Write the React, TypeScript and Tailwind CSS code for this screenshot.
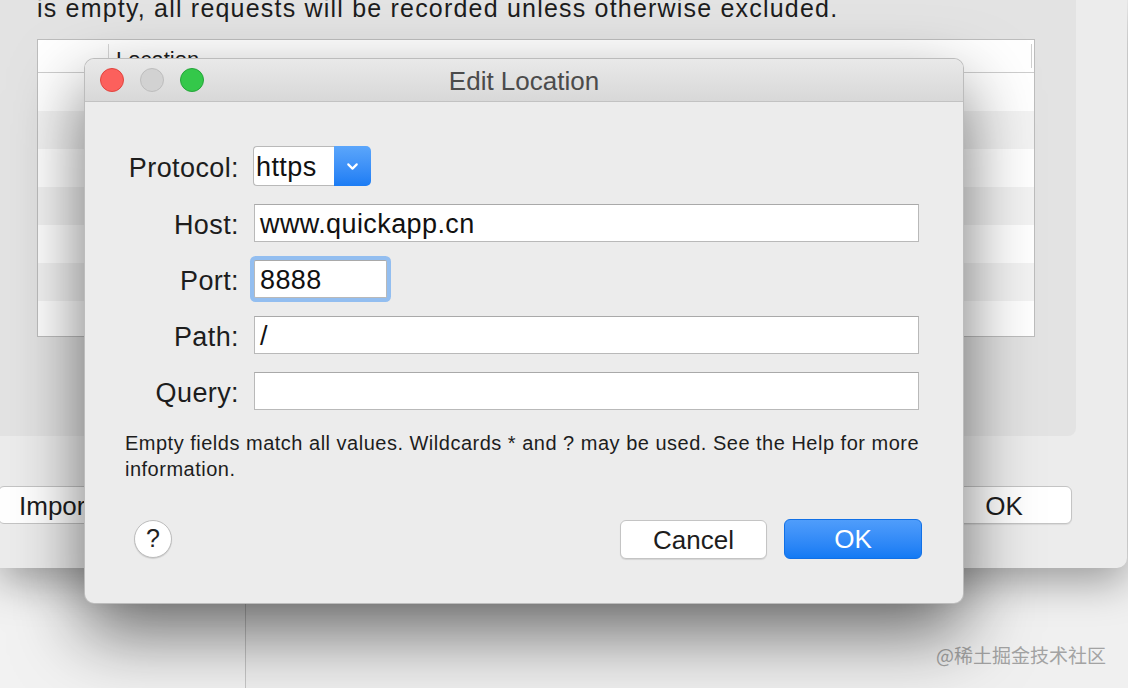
import React from 'react';
import { ChevronDown } from 'lucide-react';

const rows = [0, 1, 2, 3, 4, 5, 6];

function Label({ children }: { children: React.ReactNode }) {
    return <div className="h-[38px] text-right text-[27px] tracking-[0.4px] leading-[42px] text-[#1d1d1d]">{children}</div>;
}

function TextBox({ value, className = '' }: { value?: string, className?: string }) {
    return (
        <div className={`h-[38px] bg-white border border-[#b9b9b9] border-t-[#a9a9a9] px-[5px] pt-[2px] text-[27px] tracking-[0.4px] leading-[34px] text-[#111] whitespace-nowrap ${className}`}>
            {value}
        </div>
    );
}

function EditLocation() {
    return (
        <div className="absolute left-[84px] top-[58px] w-[880px] h-[546px] rounded-[10px] overflow-hidden bg-[#ececec] border border-black/20 shadow-[0_30px_70px_rgba(0,0,0,0.55)] flex flex-col">
            {/* barra de título */}
            <div className="relative h-[43px] shrink-0 flex items-center justify-center bg-gradient-to-b from-[#e9e9e9] to-[#d8d8d8] border-b border-[#c2c2c2]">
                <div className="absolute left-[15px] top-[9px] flex items-center gap-[16px]">
                    <span className="w-[24px] h-[24px] rounded-full bg-[#fc605c] border border-[#e0443e]" />
                    <span className="w-[24px] h-[24px] rounded-full bg-[#d2d2d2] border border-[#bdbdbd]" />
                    <span className="w-[24px] h-[24px] rounded-full bg-[#34c84a] border border-[#25a53a]" />
                </div>
                <span className="pt-[2px] text-[26px] text-[#4b4b4b]">Edit Location</span>
            </div>

            <div className="pt-[44px] pr-[44px] grid grid-cols-[154px_1fr] gap-x-[15px] gap-y-[18px] items-center">
                <Label>Protocol:</Label>
                <div className="-ml-px flex h-[40px] w-[118px]">
                    <div className="flex-1 bg-white border border-[#b9b9b9] border-r-0 rounded-l-[4px] pl-[2px] pt-[2px] text-[27px] tracking-[0.4px] leading-[36px] text-[#111]">https</div>
                    <div className="w-[37px] rounded-r-[5px] bg-gradient-to-b from-[#5ba6fb] to-[#1b7cf4] flex items-center justify-center">
                        <ChevronDown size={17} strokeWidth={3} className="text-white" />
                    </div>
                </div>

                <Label>Host:</Label>
                <TextBox value="www.quickapp.cn" />

                <Label>Port:</Label>
                <TextBox value="8888" className="w-[133px] rounded-[2px] shadow-[0_0_0_4px_#93bef0]" />

                <Label>Path:</Label>
                <TextBox value="/" />

                <Label>Query:</Label>
                <TextBox />
            </div>

            <p className="mt-[20px] px-[40px] text-[20px] tracking-[0.5px] leading-[26px] text-[#1d1d1d] whitespace-nowrap">
                Empty fields match all values. Wildcards * and ? may be used. See the Help for more<br />information.
            </p>

            <div className="mt-[37px] pl-[49px] pr-[41px] flex items-center">
                <div className="w-[38px] h-[38px] rounded-full bg-white border border-[#bdbdbd] shadow-[0_1px_1px_rgba(0,0,0,0.12)] flex items-center justify-center text-[25px] text-[#222]">?</div>
                <button className="ml-auto w-[147px] h-[39px] rounded-[6px] bg-white border border-[#c4c4c4] shadow-[0_1px_1px_rgba(0,0,0,0.1)] text-[26px] text-[#1d1d1d]">Cancel</button>
                <button className="ml-[17px] w-[138px] h-[40px] rounded-[6px] bg-gradient-to-b from-[#4f9dfb] to-[#127af4] border border-[#1170e6] text-[26px] text-white">OK</button>
            </div>
        </div>
    );
}

export default function App() {
    return (
        <div className="relative w-[1128px] h-[688px] overflow-hidden bg-[#f0f0f0] font-['Liberation_Sans',Arial,sans-serif]">
            {/* ventana de fondo */}
            <div className="relative z-10 h-[568px] w-[1127px] bg-[#ececec] rounded-br-[10px] shadow-[0_14px_40px_rgba(0,0,0,0.35)] flex flex-col">
                <div className="h-[436px] w-[1076px] bg-[#e3e3e3] rounded-br-[8px] flex flex-col">
                    <div className="-mt-[4px] pl-[37px] h-[25px] text-[25px] tracking-[1.2px] leading-[25px] text-[#1d1d1d] whitespace-nowrap">
                        is empty, all requests will be recorded unless otherwise excluded.
                    </div>
                    <div className="mt-[18px] ml-[37px] w-[998px] h-[298px] bg-white border border-[#bdbdbd] flex flex-col overflow-hidden">
                        <div className="h-[33px] shrink-0 flex border-b border-[#cdcdcd]">
                            <div className="w-[71px] border-r border-[#d6d6d6] my-[4px]" />
                            <div className="flex-1 pl-[7px] pt-[8px] text-[22px] leading-[24px] text-[#1d1d1d]">Location</div>
                            <div className="w-[3px] border-l border-[#cfcfcf] my-[4px]" />
                        </div>
                        {rows.map((i) => (
                            <div key={i} className={`h-[38px] shrink-0 ${i % 2 === 0 ? 'bg-white' : 'bg-[#f3f3f3]'}`} />
                        ))}
                    </div>
                </div>
                <div className="mt-[50px] flex">
                    <button className="-ml-[2px] w-[130px] h-[38px] pl-[20px] text-left rounded-[6px] bg-white border border-[#c4c4c4] text-[26px] text-[#1d1d1d]">Import...</button>
                    <button className="ml-auto mr-[55px] w-[136px] h-[38px] rounded-[6px] bg-white border border-[#c4c4c4] shadow-[0_1px_1px_rgba(0,0,0,0.08)] text-[26px] text-[#1d1d1d]">OK</button>
                </div>
            </div>

            {/* escritorio */}
            <div className="h-[120px] flex">
                <div className="w-[246px] border-r border-[#c6c6c6] bg-[#f2f2f2]" />
                <div className="flex-1 flex items-end justify-end pr-[22px] pb-[19px]">
                    <span className="text-[19px] text-[#a3a3a3] font-['Noto_Sans_CJK_SC','Liberation_Sans',sans-serif]">@稀土掘金技术社区</span>
                </div>
            </div>

            <div className="absolute inset-0 z-20">
                <EditLocation />
            </div>
        </div>
    );
}
